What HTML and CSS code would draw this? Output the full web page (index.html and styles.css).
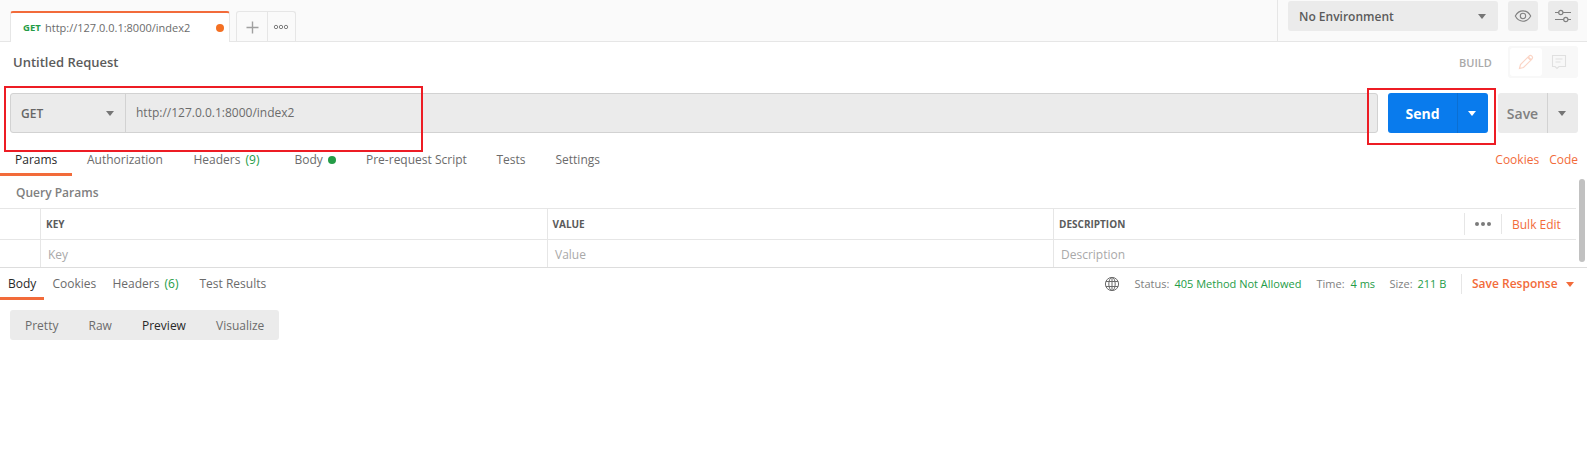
FILE: index.html
```html
<!DOCTYPE html>
<html lang="en">
<head>
<meta charset="utf-8">
<title>Untitled Request</title>
<link rel="stylesheet" href="styles.css">
</head>
<body>
<header class="topbar">
  <div class="tabs">
    <div class="tab"><span class="tab-method">GET</span><span class="tab-url">http://127.0.0.1:8000/index2</span><i class="unsaved"></i></div>
    <div class="tab-tools">
      <div class="tool plus"><svg width="13" height="13" viewBox="0 0 13 13"><path d="M6.500 .5v12M.5 6.500h12" stroke="#a0a0a0" stroke-width="1.400"/></svg></div>
      <div class="tool"><svg width="16" height="6" viewBox="0 0 16 6" fill="none" stroke="#808080"><circle cx="3" cy="3" r="1.700"/><circle cx="8" cy="3" r="1.700"/><circle cx="13" cy="3" r="1.700"/></svg></div>
    </div>
  </div>
  <div class="env">
    <div class="env-select"><span class="env-name">No Environment</span><i class="caret"></i></div>
    <div class="icon-btn"><svg width="18" height="14" viewBox="0 0 18 14" fill="none" stroke="#808080" stroke-width="1.1"><path d="M1.3 7C5 .1 13 .1 16.700 7C13 13.900 5 13.900 1.300 7Z"/><circle cx="9" cy="7" r="2.700"/></svg></div>
    <div class="icon-btn"><svg width="18" height="14" viewBox="0 0 18 14" fill="none" stroke="#808080" stroke-width="1.200"><path d="M1 3.500h3.700M9 3.500h8M1 10.500h8.700M14 10.500h3"/><circle cx="6.800" cy="3.500" r="2.100"/><circle cx="11.800" cy="10.500" r="2.100"/></svg></div>
  </div>
</header>

<section class="title-row">
  <h1 class="title">Untitled Request</h1>
  <span class="build">BUILD</span>
  <div class="mode">
    <div class="mode-item active"><svg width="16" height="16" viewBox="0 0 16 16" fill="none" stroke="#fbd5c6" stroke-width="1.200"><path d="M1.500 14.500L2.500 10.500L10.700 2.300Q12.300 .7 13.900 2.100Q15.300 3.700 13.700 5.300L5.500 13.500ZM9.700 3.300L12.700 6.300M10.700 2.300Q10.700 5.300 13.700 5.300"/></svg></div>
    <div class="mode-item comment"><svg width="16" height="16" viewBox="0 0 16 16" fill="none" stroke="#e0e0e0" stroke-width="1.100"><path d="M1.500 1.500h13v11H8l-2 2l-2-2H1.500ZM4.500 5h7M4.500 8h5"/></svg></div>
  </div>
</section>

<section class="request">
  <div class="address">
    <div class="method"><span>GET</span><i class="caret"></i></div>
    <div class="url"><span>http://127.0.0.1:8000/index2</span></div>
  </div>
  <div class="split send"><span class="main">Send</span><span class="more"><i class="caret"></i></span></div>
  <div class="split save"><span class="main">Save</span><span class="more"><i class="caret"></i></span></div>
</section>

<nav class="req-tabs">
  <div class="rt params on">Params</div>
  <div class="rt auth">Authorization</div>
  <div class="rt heads">Headers <b class="count">(9)</b></div>
  <div class="rt body">Body<i class="has-body"></i></div>
  <div class="rt pre">Pre-request Script</div>
  <div class="rt tests">Tests</div>
  <div class="rt settings">Settings</div>
  <div class="links"><span class="ck">Cookies</span><span>Code</span></div>
</nav>

<section class="query">
  <h2 class="query-title">Query Params</h2>
  <div class="grid head">
    <div></div><div class="cell">KEY</div><div class="cell">VALUE</div>
    <div class="cell desc"><span>DESCRIPTION</span>
      <div class="dots"><svg width="18" height="6" viewBox="0 0 18 6" fill="#7b7b7b"><circle cx="3" cy="3" r="2"/><circle cx="9" cy="3" r="2"/><circle cx="15" cy="3" r="2"/></svg></div>
      <div class="bulk">Bulk Edit</div></div>
  </div>
  <div class="grid entry"><div></div><div class="cell">Key</div><div class="cell">Value</div><div class="cell">Description</div></div>
  <div class="scroll"></div>
</section>

<section class="response">
  <div class="res-tabs">
    <div class="res on">Body</div><div class="res rc">Cookies</div><div class="res rh">Headers <b class="count">(6)</b></div><div class="res">Test Results</div>
  </div>
  <div class="meta">
    <svg class="globe" width="16" height="16" viewBox="0 0 16 16" fill="none" stroke="#6b6b6b" stroke-width="1"><circle cx="8" cy="8" r="6.600"/><ellipse cx="8" cy="8" rx="3.200" ry="6.600"/><path d="M8 1.400v13.200M1.900 5.500h12.200M1.900 10.500h12.200"/></svg>
    <span class="m-status">Status:</span><span class="ok v-status">405 Method Not Allowed</span>
    <span class="m-time">Time:</span><span class="ok v-time">4 ms</span>
    <span class="m-size">Size:</span><span class="ok v-size">211 B</span>
    <span class="save-res">Save Response</span><i class="caret"></i>
  </div>
</section>

<div class="views"><span class="v1">Pretty</span><span class="v2">Raw</span><span class="v3">Preview</span><span class="v4">Visualize</span></div>

<div class="mark mark-url"></div>
<div class="mark mark-send"></div>
</body>
</html>
```
FILE: styles.css
```css
* { box-sizing: border-box; }
body { margin: 0; width: 1587px; height: 454px; overflow: hidden; position: relative; background: #fff; color: #6b6b6b; font: 12px/18px "Open Sans", "Noto Sans", sans-serif; }
h1, h2 { margin: 0; }
svg { display: block; }
span, .rt, .res { white-space: nowrap; }
.caret { display: block; width: 0; height: 0; border: 4px solid transparent; border-top: 5px solid #757575; border-bottom: 0; }

.topbar { height: 42px; display: flex; justify-content: space-between; background: #fafafa; border-bottom: 1px solid #e6e6e6; }
.tabs { display: flex; align-items: flex-start; padding: 11px 0 0 10px; }
.tab { width: 220px; height: 31px; display: flex; align-items: center; padding: 1px 5px 0 12px; background: #fff; border: 1px solid #e6e6e6; border-top: 2px solid #f26b3a; border-bottom: 0; border-radius: 3px 3px 0 0; }
.tab-method { width: 22px; font-size: 9.5px; font-weight: 700; color: #249c47; }
.tab-url { flex: 1; font-size: 11px; }
.unsaved { width: 8px; height: 8px; border-radius: 50%; background: #f47023; }
.tab-tools { display: flex; margin-left: 6px; width: 60px; height: 30px; border: 1px solid #e6e6e6; border-bottom: 0; border-radius: 3px 3px 0 0; }
.tool { flex: 1; display: flex; align-items: center; justify-content: center; }
.plus { padding: 1px 0 0 2px; }
.tool + .tool { border-left: 1px solid #e6e6e6; }
.env { width: 310px; display: flex; gap: 10px; padding: 1px 9px 0 10px; border-left: 1px solid #e6e6e6; }
.env-select { width: 210px; height: 30px; display: flex; align-items: center; justify-content: space-between; padding: 1px 12px 0 11px; background: #ebebeb; border-radius: 3px; font-weight: 600; color: #5b5b5b; }
.icon-btn { width: 30px; height: 30px; display: flex; align-items: center; justify-content: center; background: #ebebeb; border-radius: 3px; }

.title-row { height: 51px; display: flex; align-items: flex-start; padding: 4px 9px 0 13px; }
.title { flex: 1; padding-top: 7px; font-size: 13px; line-height: 18px; font-weight: 600; color: #5b5b5b; }
.build { width: 49px; padding-top: 8px; font-size: 11px; font-weight: 600; color: #a9a9a9; }
.mode { width: 70px; height: 32px; display: flex; padding: 2px; background: #f8f8f8; border-radius: 3px; }
.mode-item { width: 32px; height: 28px; display: flex; align-items: center; justify-content: center; border-radius: 3px; }
.mode-item.comment { padding-left: 2px; }
.mode-item.active { background: #fff; }

.request { height: 40px; display: flex; gap: 10px; padding: 0 9px 0 10px; }
.address { flex: 1; display: flex; background: #ebebeb; border: 1px solid #d2d2d2; border-radius: 3px; }
.method { width: 115px; display: flex; align-items: center; justify-content: space-between; padding: 1px 11px 0 10px; border-right: 1px solid #d2d2d2; font-weight: 600; color: #666; }
.url { display: flex; align-items: center; padding-left: 10px; }
.split { display: flex; border-radius: 3px; font-size: 14px; font-weight: 700; }
.split .main { display: flex; align-items: center; justify-content: center; padding-top: 2px; }
.split .more { flex: 1; display: flex; align-items: center; justify-content: center; padding-right: 2px; border-left: 1px solid #d2d2d2; }
.send { width: 100px; background: #097bed; color: #fff; }
.send .main { width: 69px; }
.send .more { border-color: #0b6fd3; }
.send .caret { border-top-color: #fff; }
.save { width: 80px; background: #ebebeb; color: #808080; font-weight: 600; }
.save .main { width: 49px; }

.req-tabs { height: 43px; display: flex; padding-right: 9px; }
.rt { padding-top: 18px; }
.on { color: #282828; border-bottom: 3px solid #f26b3a; }
.params { width: 72px; padding-left: 15px; margin-right: 15px; }
.auth { width: 106.5px; }
.heads { width: 101px; }
.count { font-weight: 400; color: #249c47; margin-left: 2px; }
.body { width: 71.5px; display: flex; }
.has-body { width: 8px; height: 8px; margin: 5px 0 0 5.500px; border-radius: 50%; background: #249c47; }
.pre { width: 130.5px; }
.tests { width: 59px; }
.links { flex: 1; display: flex; justify-content: flex-end; gap: 10px; padding-top: 18px; color: #f26b3a; }

.query { position: relative; height: 92px; border-bottom: 1px solid #ddd; }
.query-title { height: 32px; padding: 8px 0 0 16px; font-size: 12px; line-height: 18px; font-weight: 600; color: #808080; }
.grid { width: 1576px; display: grid; grid-template-columns: 40px 507px 506px 1fr; border-top: 1px solid #e6e6e6; }
.head { height: 31px; font-size: 10px; font-weight: 700; color: #5b5b5b; }
.cell { border-left: 1px solid #e6e6e6; padding: 6px 0 0 5px; }
.cell:nth-child(3) { padding-left: 4.500px; }
.desc { display: flex; padding-top: 0; }
.desc > span { flex: 1; padding-top: 6px; }
.dots { width: 37px; height: 22px; margin-top: 4px; padding: 8px 0 0 9px; border-left: 1px solid #e6e6e6; }
.bulk { width: 75px; height: 20px; margin-top: 5px; padding-left: 10px; line-height: 21px; border-left: 1px solid #e6e6e6; font-size: 12px; font-weight: 400; color: #f26b3a; }
.entry { height: 28px; color: #a9a9a9; }
.entry .cell { padding-left: 7px; }
.scroll { position: absolute; right: 2px; top: 3px; width: 6px; height: 83px; border-radius: 3px; background: #c1c1c1; }

.response { height: 32px; display: flex; justify-content: space-between; }
.res-tabs, .meta { display: flex; }
.res { padding-top: 7px; }
.res.on { width: 44px; padding-left: 8px; margin-right: 8.500px; }
.rc { width: 60px; }
.rh { width: 87px; }
.meta { padding-top: 7px; width: 483px; font-size: 11px; color: #808080; }
.meta span { flex: none; }
.globe { margin: 1px 14.500px 0 0; }
.ok { color: #249c47; }
.m-status { width: 40px; }
.v-status { width: 142px; }
.m-time { width: 34px; }
.v-time { width: 39px; }
.m-size { width: 28px; }
.v-size { width: 43.500px; }
.save-res { width: 105px; height: 20px; margin-top: -1px; padding-left: 10px; line-height: 20px; border-left: 1px solid #e6e6e6; font-size: 12px; font-weight: 600; color: #f26b3a; }
.meta .caret { margin-top: 7px; border-top-color: #f26b3a; }

.views { width: 269px; height: 30px; margin: 10px 0 0 10px; padding: 7px 0 0 15px; display: flex; background: #ebebeb; border-radius: 3px; }
.v1 { width: 63.500px; }
.v2 { width: 53.500px; }
.v3 { width: 74px; color: #282828; }

.mark { position: absolute; border: 2px solid #ed1c24; }
.mark-url { left: 4px; top: 86px; width: 419px; height: 66px; }
.mark-send { left: 1367px; top: 88px; width: 129px; height: 57px; }
```
